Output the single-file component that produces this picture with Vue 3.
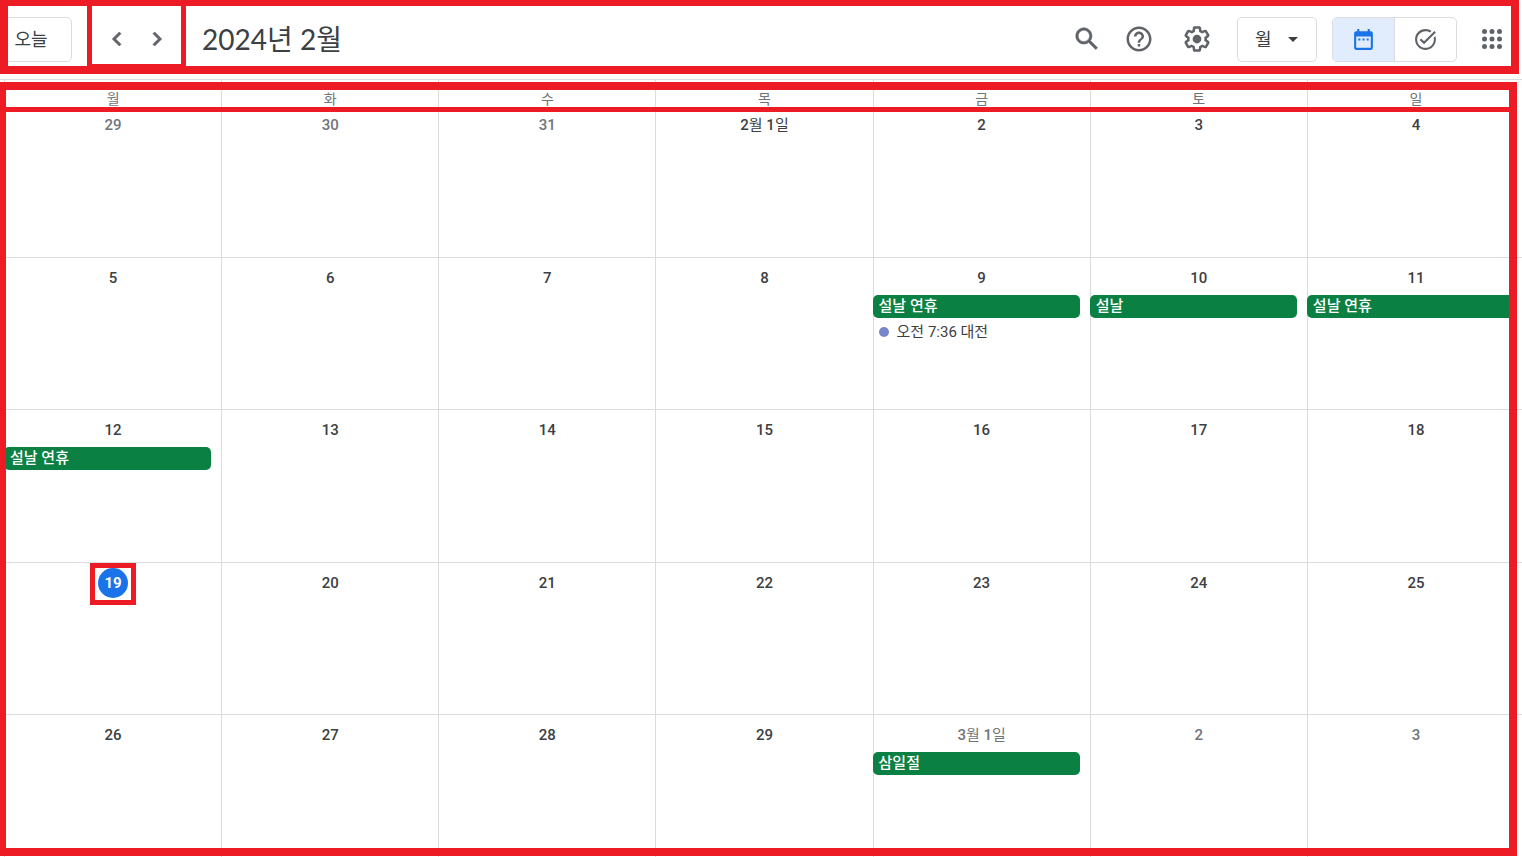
<script setup>
import { ref } from 'vue';

const view = ref('월');
const mode = ref('calendar');
const weekdays = ['월', '화', '수', '목', '금', '토', '일'];

const holiday = title => ({ type: 'holiday', title });

const weeks = ref([
    [
        { label: '29', muted: true },
        { label: '30', muted: true },
        { label: '31', muted: true },
        { label: '2월 1일' },
        { label: '2' },
        { label: '3' },
        { label: '4' },
    ],
    [
        { label: '5' },
        { label: '6' },
        { label: '7' },
        { label: '8' },
        { label: '9', events: [holiday('설날 연휴'), { type: 'timed', title: '오전 7:36 대전' }] },
        { label: '10', events: [holiday('설날')] },
        { label: '11', events: [holiday('설날 연휴')] },
    ],
    [
        { label: '12', events: [holiday('설날 연휴')] },
        { label: '13' },
        { label: '14' },
        { label: '15' },
        { label: '16' },
        { label: '17' },
        { label: '18' },
    ],
    [
        { label: '19', today: true },
        { label: '20' },
        { label: '21' },
        { label: '22' },
        { label: '23' },
        { label: '24' },
        { label: '25' },
    ],
    [
        { label: '26' },
        { label: '27' },
        { label: '28' },
        { label: '29' },
        { label: '3월 1일', muted: true, events: [holiday('삼일절')] },
        { label: '2', muted: true },
        { label: '3', muted: true },
    ],
]);

// Digits are set heavier than the month and day units
const labelParts = label => label.split(/(\d+)/).filter(Boolean);
const isNumber = part => /^\d+$/.test(part);
</script>

<template>
    <div class="page">
        <header class="toolbar">
            <button class="today-btn" type="button">오늘</button>
            <nav class="pager">
                <button type="button" aria-label="이전 달">
                    <svg viewBox="0 0 24 24"><path d="M15.41 7.41L14 6l-6 6 6 6 1.41-1.41L10.83 12z" /></svg>
                </button>
                <button type="button" aria-label="다음 달">
                    <svg viewBox="0 0 24 24"><path d="M10 6L8.59 7.41 13.17 12l-4.58 4.59L10 18l6-6z" /></svg>
                </button>
            </nav>
            <h1>2024년 2월</h1>

            <div class="tools">
                <button type="button" aria-label="검색">
                    <svg viewBox="0 0 24 24"><path d="M20.49 19l-5.73-5.73C15.53 12.2 16 10.91 16 9.5 16 5.91 13.09 3 9.5 3S3 5.91 3 9.5 5.91 16 9.5 16c1.41 0 2.7-.47 3.77-1.24L19 20.49 20.49 19zM5 9.5C5 7.01 7.01 5 9.5 5S14 7.01 14 9.5 11.99 14 9.5 14 5 11.99 5 9.5z" stroke="currentColor" stroke-width=".4" /></svg>
                </button>
                <button type="button" aria-label="도움말">
                    <svg viewBox="0 0 24 24"><path d="M11 18h2v-2h-2v2zm1-16C6.48 2 2 6.48 2 12s4.48 10 10 10 10-4.48 10-10S17.52 2 12 2zm0 18c-4.41 0-8-3.59-8-8s3.59-8 8-8 8 3.59 8 8-3.59 8-8 8zm0-14c-2.21 0-4 1.79-4 4h2c0-1.1.9-2 2-2s2 .9 2 2c0 2-3 1.75-3 5h2c0-2.25 3-2.5 3-5 0-2.21-1.79-4-4-4z" /></svg>
                </button>
                <button class="settings" type="button" aria-label="설정">
                    <svg viewBox="0 0 24 24">
                        <path d="M13.85 22.25h-3.7c-.74 0-1.36-.54-1.45-1.27l-.27-1.89c-.27-.14-.53-.29-.79-.46l-1.8.72c-.7.26-1.47-.03-1.81-.65L2.2 15.53c-.35-.66-.2-1.44.36-1.88l1.53-1.19c-.01-.15-.02-.3-.02-.46 0-.15.01-.31.02-.46l-1.52-1.19c-.59-.45-.74-1.26-.37-1.88l1.85-3.19c.34-.62 1.11-.9 1.79-.63l1.81.73c.26-.17.52-.32.78-.46l.27-1.91c.09-.7.71-1.25 1.44-1.25h3.7c.74 0 1.36.54 1.45 1.27l.27 1.89c.27.14.53.29.79.46l1.8-.72c.71-.26 1.48.03 1.82.65l1.84 3.18c.36.66.2 1.44-.36 1.88l-1.52 1.19c.01.15.02.3.02.46s-.01.31-.02.46l1.52 1.19c.56.45.72 1.23.37 1.86l-1.86 3.22c-.34.62-1.11.9-1.8.63l-1.8-.72c-.26.17-.52.32-.78.46l-.27 1.91c-.1.68-.72 1.22-1.46 1.22zm-3.23-2h2.76l.37-2.55.53-.22c.44-.18.88-.44 1.34-.78l.45-.34 2.38.96 1.38-2.4-2.03-1.58.07-.56c.03-.26.06-.51.06-.78s-.03-.53-.06-.78l-.07-.56 2.03-1.58-1.39-2.4-2.39.96-.45-.35c-.42-.32-.87-.58-1.33-.77l-.52-.22-.37-2.55h-2.76l-.37 2.55-.53.21c-.44.19-.88.44-1.34.79l-.45.33-2.38-.95-1.39 2.39 2.03 1.58-.07.56a7 7 0 0 0-.06.79c0 .26.02.53.06.78l.07.56-2.03 1.58 1.38 2.4 2.39-.96.45.35c.43.33.86.58 1.33.77l.53.22.38 2.55z" />
                        <circle cx="12" cy="12" r="3.5" />
                    </svg>
                </button>
            </div>

            <div class="view-select">
                <select v-model="view" aria-label="보기">
                    <option>일</option>
                    <option>주</option>
                    <option>월</option>
                </select>
                <svg viewBox="0 0 10 5"><path d="M0 0h10L5 5z" /></svg>
            </div>

            <div class="mode-switch">
                <button type="button" aria-label="캘린더" :class="{ active: mode === 'calendar' }" @click="mode = 'calendar'">
                    <svg viewBox="0 0 24 24"><path d="M19 4h-1V2h-2v2H8V2H6v2H5c-1.1 0-2 .9-2 2v14c0 1.1.9 2 2 2h14c1.1 0 2-.9 2-2V6c0-1.1-.9-2-2-2zm0 16H5V9h14v11zM7 11h2v2H7zm4 0h2v2h-2zm4 0h2v2h-2z" /></svg>
                </button>
                <button type="button" aria-label="할 일" :class="{ active: mode === 'tasks' }" @click="mode = 'tasks'">
                    <svg viewBox="0 0 24 24"><path d="M22 5.18L10.59 16.6l-4.24-4.24 1.41-1.41 2.83 2.83 10-10L22 5.18zm-2.21 5.04c.13.57.21 1.17.21 1.78 0 4.42-3.58 8-8 8s-8-3.58-8-8 3.58-8 8-8c1.58 0 3.04.46 4.28 1.25l1.44-1.44C16.1 2.67 14.13 2 12 2 6.48 2 2 6.48 2 12s4.48 10 10 10 10-4.48 10-10c0-1.19-.22-2.33-.6-3.39l-1.61 1.61z" /></svg>
                </button>
            </div>

            <button class="apps" type="button" aria-label="앱">
                <svg viewBox="0 0 24 24">
                    <template v-for="y in [6, 12, 18]" :key="y">
                        <circle v-for="x in [6, 12, 18]" :key="x" :cx="x" :cy="y" r="2" />
                    </template>
                </svg>
            </button>
        </header>

        <main class="calendar">
            <table>
                <thead>
                <tr>
                    <th v-for="day in weekdays" :key="day">{{ day }}</th>
                </tr>
                </thead>
                <tbody>
                <tr v-for="(week, i) in weeks" :key="i">
                    <td v-for="day in week" :key="day.label">
                        <div class="date" :class="{ muted: day.muted, today: day.today }">
                            <div><span v-for="(part, n) in labelParts(day.label)" :key="n" :class="{ num: isNumber(part) }">{{ part }}</span></div>
                        </div>
                        <div v-for="event in day.events" :key="event.title" class="event" :class="event.type">
                            {{ event.title }}
                        </div>
                    </td>
                </tr>
                </tbody>
            </table>
            <div class="frame"></div>
        </main>
    </div>
</template>

<style>
body {
    margin: 0;
    background: #fff;
}
</style>

<style scoped>
.page {
    display: flex;
    flex-direction: column;
    height: 100vh;
    overflow: hidden;
    color: #3c4043;
    font-family: Roboto, "Noto Sans CJK KR", sans-serif;
}

button {
    display: flex;
    align-items: center;
    justify-content: center;
    box-sizing: border-box;
    padding: 0;
    border: 0;
    background: none;
    color: #5f6368;
    font-family: inherit;
    cursor: pointer;
}

svg {
    display: block;
    fill: currentColor;
}

.toolbar {
    display: flex;
    align-items: center;
    flex-shrink: 0;
    box-sizing: border-box;
    height: 74px;
    margin: 0 3px 5px 0;
    padding-top: 6px;
    border: 8px solid #ed1c24;
    border-top-width: 6px;
    overflow: hidden;
}

.today-btn {
    width: 80px;
    height: 45px;
    margin-left: -16px;
    padding: 0 2px 2px 0;
    border: 1px solid #dadce0;
    border-radius: 5px;
    color: #3c4043;
    font-size: 18px;
    font-weight: 400;
}

.pager {
    display: flex;
    align-self: stretch;
    align-items: center;
    margin: -6px 16px 0 15px;
    padding: 8px 4px 0 5px;
    border: solid #ed1c24;
    border-width: 0 5px 2px;
}

.pager button {
    width: 40px;
    height: 40px;
}

.pager svg {
    width: 28px;
    height: 28px;
    stroke: currentColor;
    stroke-width: 0.6px;
}

.mode-switch svg {
    width: 25px;
    height: 25px;
}

h1 {
    flex: 1;
    margin: 0;
    font-family: Lato, "Noto Sans CJK KR", sans-serif;
    font-size: 28px;
    font-weight: 400;
    line-height: 36px;
    white-space: nowrap;
}

.tools {
    display: flex;
    gap: 2px;
}

.tools button {
    width: 50px;
    height: 50px;
}

.tools .settings {
    margin-left: 6px;
}

.tools svg,
.apps svg {
    width: 30px;
    height: 30px;
}

.view-select {
    position: relative;
    margin: 0 15px;
}

.view-select select {
    appearance: none;
    box-sizing: border-box;
    width: 80px;
    height: 45px;
    padding: 0 17px;
    border: 1px solid #dadce0;
    border-radius: 5px;
    background: #fff;
    color: #3c4043;
    font-family: inherit;
    font-size: 18px;
    font-weight: 400;
}

.view-select svg {
    position: absolute;
    top: 20px;
    right: 19px;
    width: 10px;
    height: 5px;
    pointer-events: none;
}

.mode-switch {
    display: flex;
    box-sizing: border-box;
    width: 125px;
    height: 45px;
    border: 1px solid #dadce0;
    border-radius: 5px;
    overflow: hidden;
}

.mode-switch button {
    flex: 1;
}

.mode-switch button + button {
    border-left: 1px solid #dadce0;
}

.mode-switch .active {
    background: #e1edfc;
    color: #1a73e8;
}

.apps {
    width: 39px;
    height: 45px;
    margin-left: 15px;
}

.calendar {
    position: relative;
    flex: 1;
    min-height: 0;
    border-top: 1px solid #dadce0;
}

table {
    width: calc(100% - 2px);
    margin-left: 4px;
    border-collapse: separate;
    border-spacing: 0;
    table-layout: fixed;
}

tbody tr {
    height: calc((100vh - 96px) / 5);
}

th,
td {
    padding: 0;
    border-left: 1px solid #dadce0;
    vertical-align: top;
}

th {
    height: 12px;
    padding-top: 13px;
    color: #70757a;
    font-size: 14px;
    font-weight: 400;
    line-height: 12px;
}

td {
    padding-top: 5px;
}

tr + tr td {
    border-top: 1px solid #dadce0;
}

.date {
    display: flex;
    justify-content: center;
    height: 30px;
    margin-bottom: 2px;
    font-size: 15px;
    line-height: 30px;
    white-space: pre;
}

.num {
    font-weight: 500;
}

.muted {
    color: #70757a;
}

.today div {
    position: relative;
    width: 30px;
    border-radius: 50%;
    background: #1a73e8;
    color: #fff;
    text-align: center;
}

.today .num {
    font-weight: 700;
}

.today div::after {
    content: "";
    position: absolute;
    inset: -5px -8px -7px;
    border: 5px solid #ed1c24;
}

.event {
    height: 23px;
    margin: 0 10px 2px -1px;
    padding-left: 6px;
    border-radius: 5px;
    font-size: 15px;
    line-height: 22px;
    white-space: nowrap;
}

.holiday {
    position: relative;
    background: #0b8043;
    color: #fff;
    font-weight: 500;
}

.timed {
    display: flex;
    align-items: center;
    gap: 8px;
}

.timed::before {
    content: "";
    width: 10px;
    height: 10px;
    border-radius: 50%;
    background: #7986cb;
}

.frame {
    position: absolute;
    inset: 2px 5px 1px 0;
    border: 8px solid #ed1c24;
    border-left-width: 6px;
    pointer-events: none;
}

.frame::before {
    content: "";
    display: block;
    height: 17px;
    border-bottom: 5px solid #ed1c24;
}
</style>
